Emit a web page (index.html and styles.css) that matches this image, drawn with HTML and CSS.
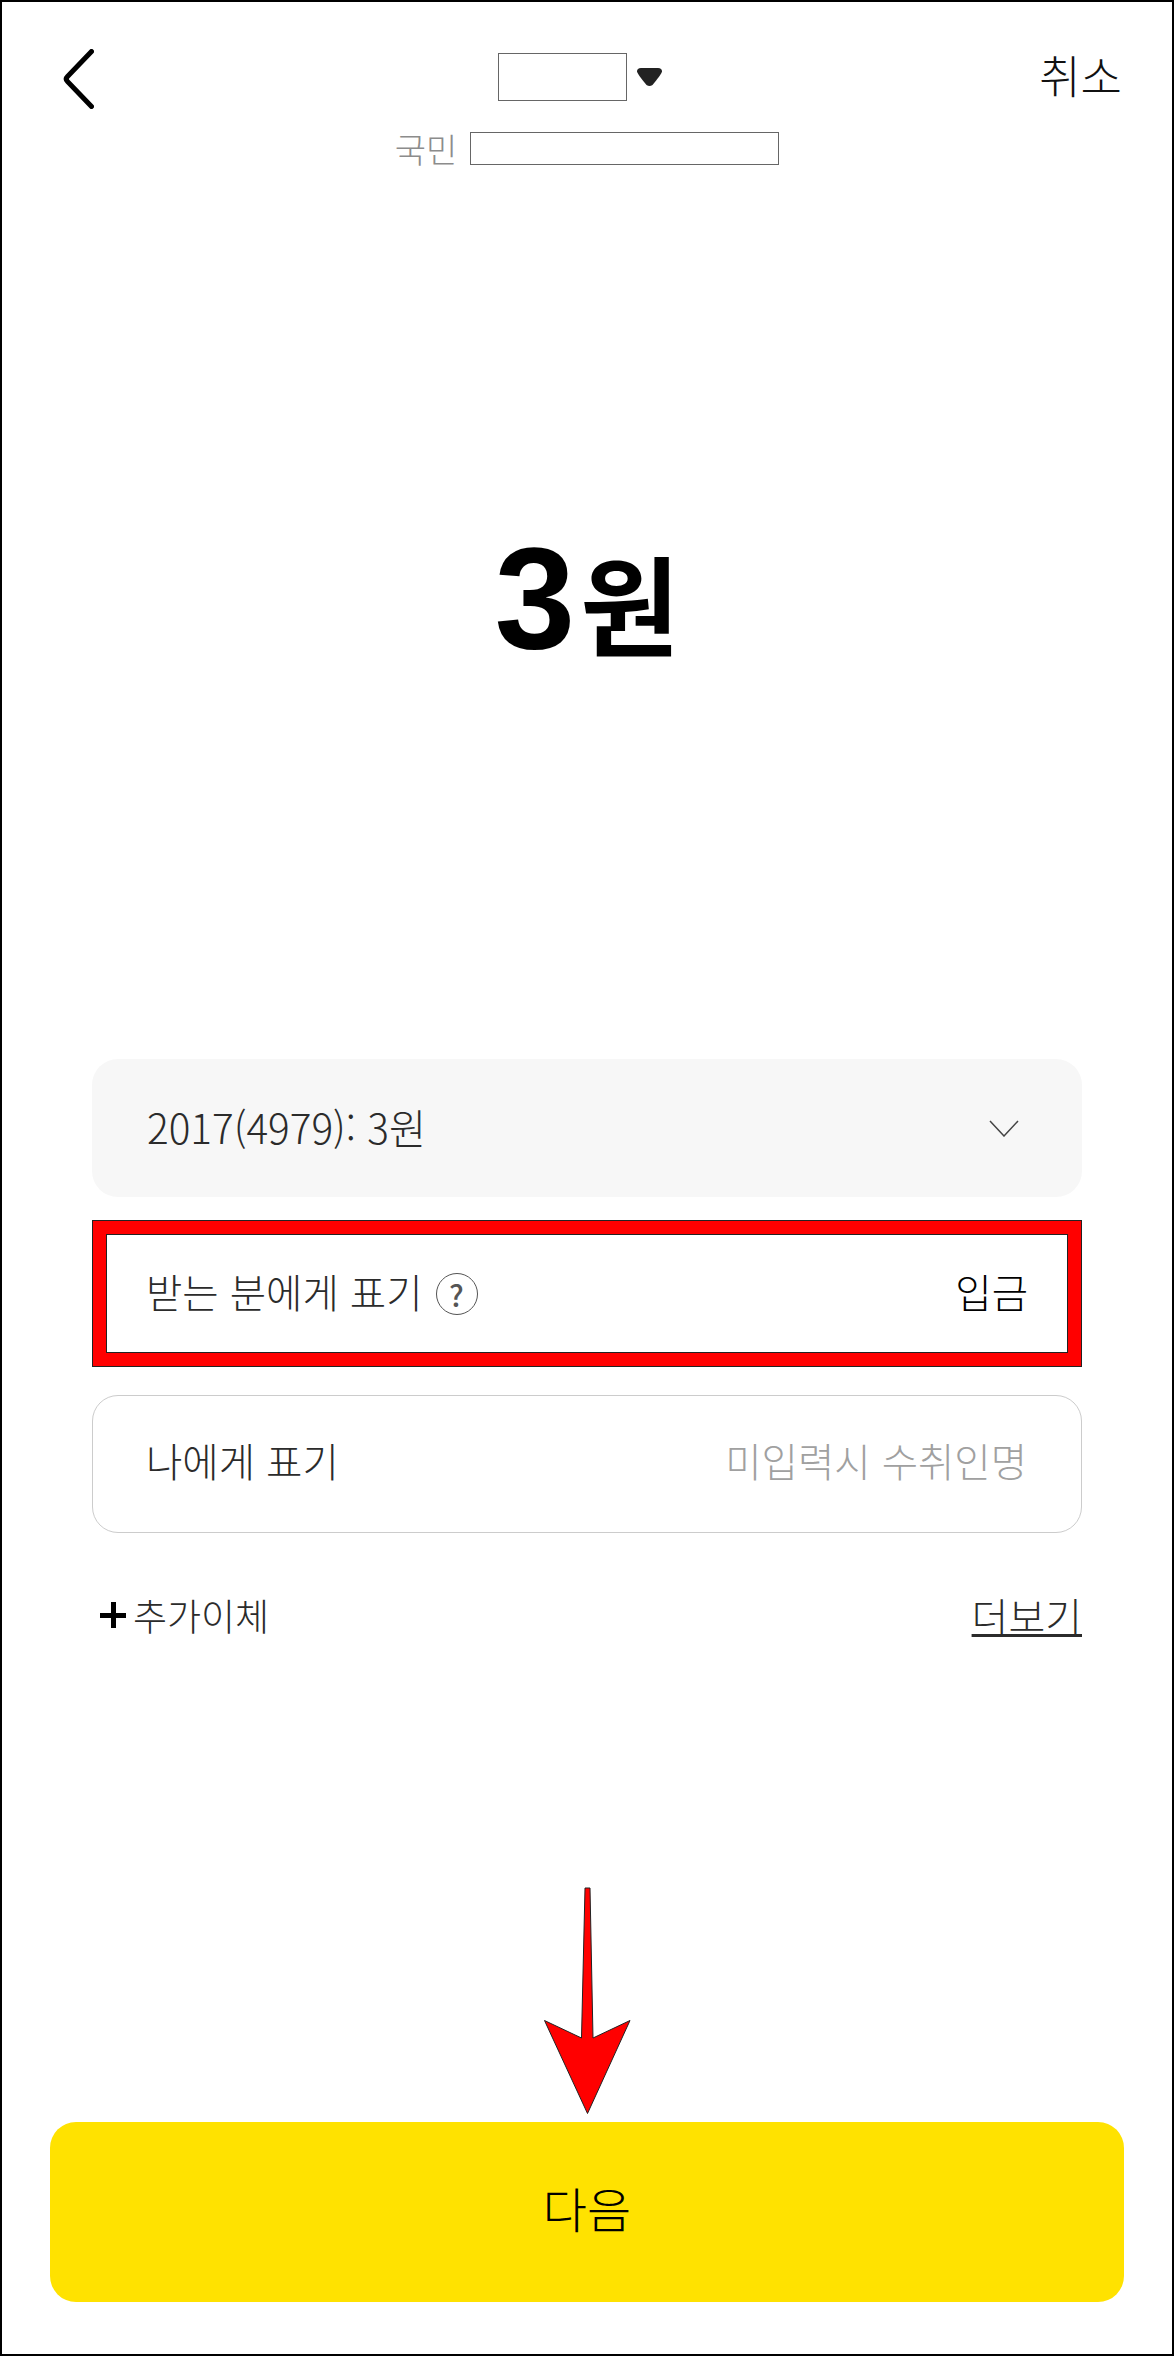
FILE: index.html
```html
<!DOCTYPE html>
<html lang="ko">
<head>
<meta charset="utf-8">
<title>이체</title>
<link rel="stylesheet" href="styles.css">
</head>
<body>
<main class="page">
  <header class="topbar">
    <svg class="back" viewBox="0 0 32 60" aria-hidden="true"><path d="M29.500 2.500 5.500 27.500q-2.500 2.500 0 5L29.500 57.500"/></svg>
    <div class="recipient">
      <div class="name-row">
        <span class="mask mask-name"></span>
        <svg class="caret" viewBox="0 0 25 18" aria-hidden="true"><path d="M4 0h17q4 0 4 3.500q0 2-9.500 13.500q-3 1.800-6 0Q0 5.500 0 3.500Q0 0 4 0z"/></svg>
      </div>
      <div class="bank-row">
        <span class="bank">국민</span>
        <span class="mask mask-acct"></span>
      </div>
    </div>
    <span class="cancel">취소</span>
  </header>

  <h1 class="amount"><span class="digit">3</span><span class="unit">원</span></h1>

  <section class="fields">
    <div class="field field-select">
      <span class="label label-account">2017(4979): 3원</span>
      <svg class="chev" viewBox="0 0 30 17" aria-hidden="true"><path d="M1 1l14 15L29 1"/></svg>
    </div>
    <div class="field field-marked">
      <span class="label-group">
        <span class="label">받는 분에게 표기</span>
        <span class="help">?</span>
      </span>
      <span class="value">입금</span>
    </div>
    <div class="field field-outline">
      <span class="label">나에게 표기</span>
      <span class="placeholder">미입력시 수취인명</span>
    </div>
    <div class="actions">
      <span class="add"><span class="plus"></span>추가이체</span>
      <a class="more">더보기</a>
    </div>
  </section>

  <button class="next">다음</button>

  <svg class="arrow" viewBox="0 0 87 228" aria-hidden="true"><path d="M41 1h5l3 150 37-17.500L43.500 226.500.5 133.500l37 17.500z"/></svg>
</main>
</body>
</html>
```

FILE: styles.css
```css
* { box-sizing: border-box; }
html, body { margin: 0; padding: 0; background: #fff; }
body { font-family: "Noto Sans CJK KR", "Noto Sans", sans-serif; font-weight: 300; color: #2b2b2b; }

.page {
  position: relative;
  width: 1174px;
  height: 2356px;
  border: 2px solid #000;
  background: #fff;
  display: flex;
  flex-direction: column;
  overflow: hidden;
}

.topbar {
  display: flex;
  justify-content: space-between;
  align-items: flex-start;
  padding: 47px 50px 0 60px;
  height: 200px;
}
.back { width: 32px; height: 60px; fill: none; stroke: #000; stroke-width: 5; stroke-linecap: round; stroke-linejoin: round; }
.recipient { position: absolute; left: 0; right: 0; top: 51px; display: flex; flex-direction: column; align-items: center; gap: 31px; }
.name-row { display: flex; align-items: center; gap: 10px; margin-left: -14px; }
.bank-row { display: flex; align-items: center; gap: 13px; height: 33px; }
.mask { display: block; border: 1px solid #666; background: #fff; }
.mask-name { width: 129px; height: 48px; }
.mask-acct { width: 309px; height: 33px; }
.caret { width: 25px; height: 18px; fill: #222; }
.bank { font-size: 34px; line-height: 33px; color: #8c8c8c; }
.cancel { font-size: 45px; line-height: 50px; margin-top: 1px; color: #111; }

.amount { margin: 331px 0 0; height: 130px; display: flex; justify-content: center; align-items: baseline; color: #000; font-weight: 700; line-height: 130px; }
.digit { font-family: "Liberation Sans", sans-serif; font-size: 145px; margin-right: 5px; }
.unit { font-size: 108px; }

.fields { margin: 396px 90px 0; display: flex; flex-direction: column; }
.field { display: flex; justify-content: space-between; align-items: center; padding: 0 54px 6px 54px; font-size: 39.500px; }
.label { white-space: nowrap; }
.label-account { font-size: 40.500px; }
.field-select { height: 138px; background: #f7f7f7; border-radius: 26px; padding: 0 63px 4px 55px; }
.chev { width: 30px; height: 17px; fill: none; stroke: #444; stroke-width: 1.500; margin-top: 4px; }
.field-marked {
  height: 147px;
  margin-top: 23px;
  border: 14px solid #f00;
  outline: 1px solid #222;
  outline-offset: -1px;
  box-shadow: inset 0 0 0 1px #222;
  padding: 0 40px 6px 40px;
}
.label-group { display: flex; align-items: center; gap: 13px; }
.help { width: 42px; height: 42px; margin-top: 6px; border: 1px solid #555; border-radius: 50%; display: flex; align-items: center; justify-content: center; font-size: 30px; font-weight: 500; color: #555; line-height: 1; }
.value { color: #000; }
.field-outline { height: 138px; margin-top: 28px; border: 1.500px solid #ccc; border-radius: 26px; padding: 0 54px 10px 53px; }
.placeholder { color: #a0a0a0; }

.actions { display: flex; justify-content: space-between; align-items: center; margin-top: 57px; padding-left: 8px; height: 50px; }
.add { display: flex; align-items: center; gap: 7px; font-size: 37px; }
.plus { display: block; width: 26px; height: 26px; background: linear-gradient(#000, #000) center / 100% 5px no-repeat, linear-gradient(#000, #000) center / 5px 100% no-repeat; }
.more { font-size: 40px; text-decoration: underline; text-decoration-thickness: 3px; text-underline-offset: 2px; }

.next {
  position: absolute;
  left: 48px;
  top: 2120px;
  width: 1074px;
  height: 180px;
  border: 0;
  border-radius: 26px;
  background: #ffe200;
  color: #000;
  font: inherit;
  font-size: 48px;
  padding-bottom: 12px;
}
.arrow { position: absolute; left: 542px; top: 1885px; width: 87px; height: 228px; fill: #f00; stroke: #222; stroke-width: 1; }
```
